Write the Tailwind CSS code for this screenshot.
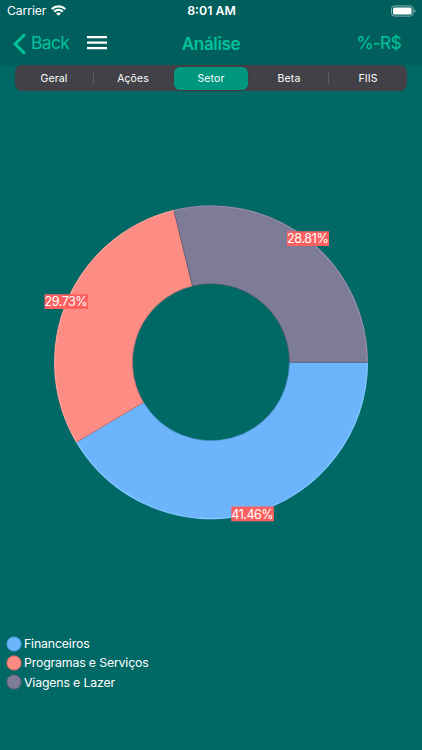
<!DOCTYPE html>
<html lang="pt-BR">
<head>
<meta charset="utf-8">
<meta name="viewport" content="width=device-width, initial-scale=1">
<title>Análise</title>
<script src="https://cdn.jsdelivr.net/npm/@tailwindcss/browser@4"></script>
</head>
<body class="bg-[#006966]">
<div class="w-[422px] h-[750px] flex flex-col overflow-hidden bg-[#006966] text-white font-['Inter','Liberation_Sans',sans-serif]">
  <header class="h-[65px] shrink-0 bg-[#005e5d]">
    <div class="h-[22px] grid grid-cols-3 items-center pl-[7px] pr-[6px] text-[12px] leading-[22px]">
      <div class="flex items-center">
        <span class="w-[44px] text-[12.2px] tracking-[-0.1px]">Carrier</span>
        <svg class="w-[15px] h-[11px] mt-[-1px]" viewBox="0 0 15 11" fill="none" stroke="white" stroke-width="2.2">
          <path d="M.8 4.1C4.6.4 10.4.4 14.2 4.1"/><path d="M3.2 6.7c2.5-2.4 6.1-2.4 8.6 0"/><path d="M7.5 10.8 5 8.4c1.5-1.3 3.5-1.3 5 0z" fill="white" stroke="none"/>
        </svg>
      </div>
      <span class="text-center font-semibold text-[12.3px] tracking-[0px]">8:01 AM</span>
      <svg class="justify-self-end w-[26px] h-[12px] mt-[-1px]" viewBox="0 0 26 12">
        <rect x="1.5" y=".9" width="21.6" height="10.2" rx="3" fill="none" stroke="white" stroke-opacity=".5"/>
        <rect x="3" y="2.4" width="18.6" height="7.2" rx="1.6" fill="white"/>
        <path d="M24.3 4.2c1.7.5 1.7 3.1 0 3.6z" fill="white" fill-opacity=".55"/>
      </svg>
    </div>
    <nav class="h-[43px] grid grid-cols-3 items-center pl-[13px] pr-[21px] text-[17.5px] text-[#00c29b]">
      <div class="flex items-center">
        <svg class="w-[13px] h-[22px]" viewBox="0 0 13 22" fill="none" stroke="currentColor" stroke-width="3"><path d="M11.9 1.2 2.2 11l9.7 9.8"/></svg>
        <span class="ml-[5px] w-[56px] tracking-[-0.7px]">Back</span>
        <svg class="w-[20px] h-[14px] mt-[-2px]" viewBox="0 0 20 14" fill="white"><path d="M0 0h20v2.2H0zM0 5.5h20v2.2H0zM0 11h20v2.2H0z"/></svg>
      </div>
      <span class="text-center font-semibold text-[17.2px] tracking-[-0.45px] ml-[8px]">Análise</span>
      <span class="text-right tracking-[-0.8px]">%-R$</span>
    </nav>
  </header>
  <div class="mx-[15px] h-[26px] shrink-0 flex items-center rounded-[7px] bg-[#424147] text-[10.5px] text-center tracking-[0.1px]">
    <span class="flex-1 pt-[2px]">Geral</span><i class="w-px h-[11px] bg-white/15"></i>
    <span class="flex-1 pt-[2px]">Ações</span>
    <span class="w-[74px] mx-[2px] h-[23px] leading-[24px] rounded-[6px] bg-[#009780] shadow-sm">Setor</span>
    <span class="flex-1 pt-[2px]">Beta</span><i class="w-px h-[11px] bg-white/15"></i>
    <span class="flex-1 pt-[2px]">FIIS</span>
  </div>
  <svg class="w-[422px] h-[541px] shrink-0" viewBox="0 91 422 541">
    <g stroke-width=".7" stroke-linejoin="round">
      <path d="M367.6 362.3A156.6 156.6 0 0 1 76.4 442.3L143.5 402.4A78.5 78.5 0 0 0 289.5 362.3z" fill="#6cb4fc" stroke="#5b9bdc"/>
      <path d="M76.4 442.3A156.6 156.6 0 0 1 173.9 210.2L192.4 286A78.5 78.5 0 0 0 143.5 402.4z" fill="#fc8c84" stroke="#bb6c73"/>
      <path d="M173.9 210.2A156.6 156.6 0 0 1 367.6 362.3H289.5A78.5 78.5 0 0 0 192.4 286z" fill="#7d7b96" stroke="#5a566f"/>
    </g>
    <g fill="none" stroke-width="1.1">
      <path d="M367.3 362.8A156.3 156.3 0 0 1 76.7 442.1" stroke="#83c9ff"/>
      <path d="M76.7 442.1A156.3 156.3 0 0 1 173.9 210.5" stroke="#ffa79f"/>
      <path d="M173.9 210.5A156.3 156.3 0 0 1 367.3 361.8" stroke="#9695af"/>
    </g>
    <g fill="#fc6060"><path d="M287 231.3h42v14.6h-42zM44.5 294.3h43.4v14.6H44.5zM231.3 506.5h42.6v14.8h-42.6z"/></g>
    <g fill="white" font-size="12.6">
      <text x="287" y="243.2" textLength="41.8">28.81%</text>
      <text x="44.5" y="306.2" textLength="43.2">29.73%</text>
      <text x="231.3" y="518.6" textLength="42.4">41.46%</text>
    </g>
  </svg>
  <ul class="pl-[6px] pt-[2px] text-[12.3px] tracking-[-0.15px] leading-[19.3px]">
    <li class="flex items-center gap-[2px]"><svg class="w-[16px] h-[16px]" viewBox="0 0 16 16"><circle cx="8" cy="8" r="7.1" fill="#6cb4fc" stroke="#4a9be4"/></svg><span>Financeiros</span></li>
    <li class="flex items-center gap-[2px]"><svg class="w-[16px] h-[16px]" viewBox="0 0 16 16"><circle cx="8" cy="8" r="7.1" fill="#fc8c84" stroke="#ee665f"/></svg><span>Programas e Serviços</span></li>
    <li class="flex items-center gap-[2px]"><svg class="w-[16px] h-[16px]" viewBox="0 0 16 16"><circle cx="8" cy="8" r="7.1" fill="#7d7b96" stroke="#65617e"/></svg><span>Viagens e Lazer</span></li>
  </ul>
</div>
</body>
</html>
